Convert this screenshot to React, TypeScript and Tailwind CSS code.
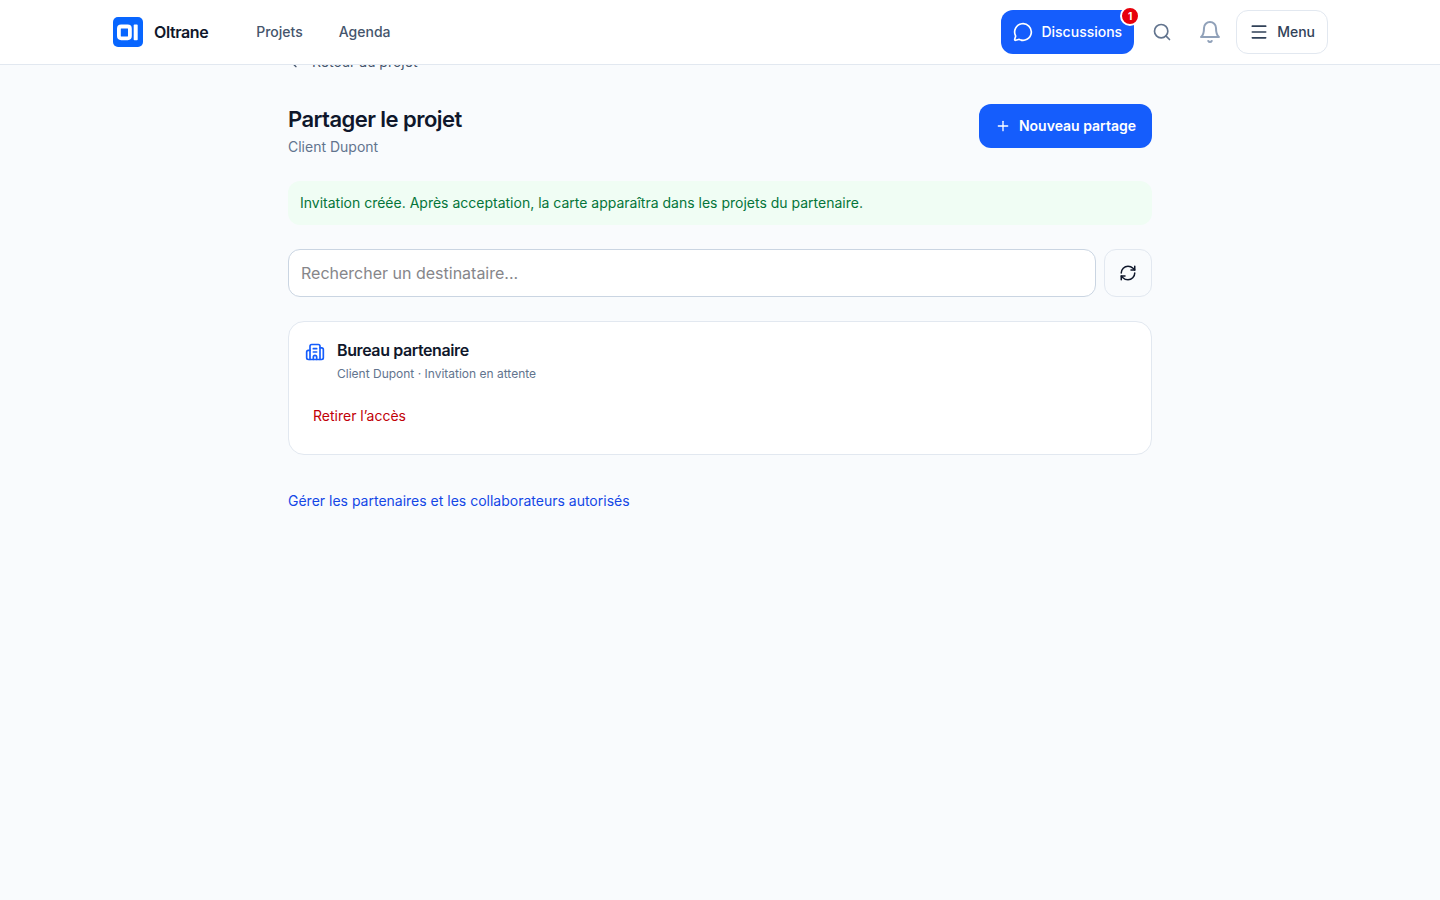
import { ArrowLeft, Building2, Menu, MessageCircle, Plus, RefreshCw, Search } from "lucide-react";

interface Share {
  id: string;
  recipient: string;
  project: string;
  status: string;
}

const NAV = [
  { label: "Projets", href: "#projets" },
  { label: "Agenda", href: "#agenda" },
];

const SHARES: Share[] = [
  {
    id: "bureau-partenaire",
    recipient: "Bureau partenaire",
    project: "Client Dupont",
    status: "Invitation en attente",
  },
];

function Logo() {
  return (
    <svg viewBox="0 0 32 32" className="size-8" aria-hidden="true">
      <rect x="1" y="1" width="30" height="30" rx="5" fill="#0866ff" />
      <rect x="6.9" y="10.5" width="11" height="11.8" rx="2.2" fill="none" stroke="#fff" strokeWidth="3.8" />
      <rect x="21.7" y="8.6" width="4" height="15.6" rx="0.8" fill="#fff" />
    </svg>
  );
}

function BellIcon() {
  return (
    <svg
      viewBox="0 0 24 24"
      className="size-6"
      fill="none"
      stroke="currentColor"
      strokeWidth="2"
      strokeLinecap="round"
      strokeLinejoin="round"
      aria-hidden="true"
    >
      <path d="M6 8a6 6 0 0 1 12 0c0 7 3 9 3 9H3s3-2 3-9" />
      <path d="M10.3 21a1.94 1.94 0 0 0 3.4 0" />
    </svg>
  );
}

function TopBar() {
  return (
    <header className="fixed inset-x-0 top-0 z-10 border-b border-slate-200 bg-white">
      <div className="mx-auto flex h-16 max-w-7xl items-center justify-between px-8">
        <div className="flex items-center gap-8">
          <a href="#accueil" className="flex items-center gap-2.5">
            <Logo />
            <span className="font-semibold tracking-tight text-slate-900">Oltrane</span>
          </a>
          <nav className="flex items-center gap-1">
            {NAV.map((item) => (
              <a key={item.href} href={item.href} className="px-4 py-3 text-sm font-medium text-slate-600">
                {item.label}
              </a>
            ))}
          </nav>
        </div>
        <div className="flex items-center gap-1.5">
          <button
            type="button"
            className="relative flex h-11 items-center gap-2 rounded-xl bg-[#155dfc] px-3 text-sm font-medium text-white"
          >
            <MessageCircle className="size-5" />
            Discussions
            <span className="absolute -top-1 -right-1.5 flex size-5 items-center justify-center rounded-full border-2 border-white bg-[#e7000b] text-[10px] font-bold">
              1
            </span>
          </button>
          <div className="flex items-center gap-1">
            <button type="button" aria-label="Rechercher" className="flex size-11 items-center justify-center text-slate-500">
              <Search className="size-5" />
            </button>
            <button type="button" aria-label="Notifications" className="flex size-11 items-center justify-center text-slate-400">
              <BellIcon />
            </button>
            <button
              type="button"
              className="flex h-11 items-center gap-2 rounded-xl border border-slate-200 bg-white px-3 text-sm font-medium text-slate-700"
            >
              <Menu className="size-5" />
              Menu
            </button>
          </div>
        </div>
      </div>
    </header>
  );
}

function ShareCard({ share }: { share: Share }) {
  return (
    <article className="rounded-2xl border border-slate-200 bg-white p-4">
      <div className="flex items-start gap-3">
        <Building2 className="mt-1 size-5 text-[#155dfc]" />
        <div>
          <h2 className="font-semibold tracking-tight text-slate-900">{share.recipient}</h2>
          <p className="mt-1 text-xs text-slate-500">
            {share.project} · {share.status}
          </p>
        </div>
      </div>
      <button type="button" className="mt-3 flex h-11 items-center px-2 text-sm text-[#c10007]">
        Retirer l’accès
      </button>
    </article>
  );
}

export default function App() {
  return (
    <div className="min-h-screen bg-[#f9fbfd] font-['Inter',sans-serif] text-slate-900">
      <TopBar />
      <main className="mx-auto max-w-4xl px-4 pt-10 pb-12">
        <a href="#projet" className="inline-flex h-11 items-center gap-2 text-sm text-slate-600">
          <ArrowLeft className="size-4" />
          Retour au projet
        </a>
        <div className="mt-5 flex items-start justify-between gap-4">
          <div>
            <h1 className="text-[22px] leading-[30px] font-semibold tracking-tight">Partager le projet</h1>
            <p className="mt-[3px] text-sm text-slate-500">Client Dupont</p>
          </div>
          <button
            type="button"
            className="flex h-11 items-center gap-2 rounded-xl bg-[#155dfc] px-4 text-sm font-semibold text-white"
          >
            <Plus className="size-4" />
            Nouveau partage
          </button>
        </div>

        <p role="status" className="mt-6 rounded-xl bg-green-50 p-3 text-sm text-[#04753a]">
          Invitation créée. Après acceptation, la carte apparaîtra dans les projets du partenaire.
        </p>

        <div className="mt-6 flex gap-2">
          <input
            type="search"
            aria-label="Rechercher un destinataire"
            placeholder="Rechercher un destinataire..."
            className="h-12 min-w-0 flex-1 rounded-xl border border-slate-300 bg-white px-3 placeholder:text-[#86868a]"
          />
          <button
            type="button"
            aria-label="Actualiser"
            className="flex size-12 items-center justify-center rounded-xl border border-slate-200"
          >
            <RefreshCw className="size-[18px]" />
          </button>
        </div>

        <section aria-label="Partages" className="mt-6 space-y-3">
          {SHARES.map((s) => (
            <ShareCard key={s.id} share={s} />
          ))}
        </section>

        <a href="#partenaires" className="mt-6 inline-flex h-11 items-center text-sm text-[#1447e6]">
          Gérer les partenaires et les collaborateurs autorisés
        </a>
      </main>
    </div>
  );
}
